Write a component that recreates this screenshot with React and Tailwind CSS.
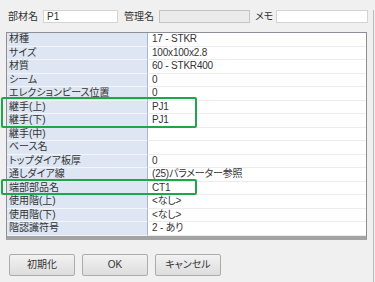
import React from 'react';

const rows = [
  ['材種', '17 - STKR'],
  ['サイズ', '100x100x2.8'],
  ['材質', '60 - STKR400'],
  ['シーム', '0'],
  ['エレクションピース位置', '0'],
  ['継手(上)', 'PJ1'],
  ['継手(下)', 'PJ1'],
  ['継手(中)', ''],
  ['ベース名', ''],
  ['トップダイア板厚', '0'],
  ['通しダイア線', '(25)パラメーター参照'],
  ['端部部品名', 'CT1'],
  ['使用階(上)', '<なし>'],
  ['使用階(下)', '<なし>'],
  ['階認識符号', '2 - あり'],
];

const font = "font-['Liberation_Sans','Noto_Sans_CJK_JP',sans-serif] [font-feature-settings:'palt']";

const Button = ({ children }) => (
  <button className="w-[66px] h-[22px] rounded-[2px] border border-[#acacac] bg-gradient-to-b from-[#f2f2f2] to-[#dddddd] text-[10px] text-[#333]">
    {children}
  </button>
);

const App = () => {
  return (
    <div className={`relative w-[375px] h-[282px] overflow-hidden bg-[#f0f0f0] text-[#333] ${font}`}>
      <div className="w-[374px] h-full border-r border-[#b9b9b9]">
        {/* Header fields */}
        <div className="flex items-center h-[13px] mt-[10px] pl-[8px] text-[10px] leading-none">
          <span className="w-[35px]">部材名</span>
          <div className="w-[75px] h-[13px] bg-white border border-[#d4d4d4] pl-[3px] flex items-center">P1</div>
          <span className="w-[35px] ml-[6px]">管理名</span>
          <div className="w-[91px] h-[13px] bg-[#ebebeb] border border-[#c4c4c4]" />
          <span className="w-[21px] ml-[5px]">メモ</span>
          <div className="w-[92px] h-[13px] bg-white border border-[#d4d4d4]" />
        </div>

        {/* Property grid */}
        <div className="mt-[9px] ml-[6px] w-[361px] border border-[#8c8f95] border-b-[4px] border-b-[#a3a3a3] bg-white text-[10px] leading-none">
          {rows.map(([label, value]) => (
            <div key={label} className="flex h-[13.5px]">
              <div className="w-[141px] shrink-0 bg-[#dde6f2] border-r border-[#a7b6cb] border-b border-b-[#f2f5fa] pl-[2px] flex items-center">
                {label}
              </div>
              <div className="flex-1 border-b border-[#ececec] pl-[4px] flex items-center tracking-[-0.2px]">{value}</div>
            </div>
          ))}
        </div>

        {/* Buttons */}
        <div className="flex gap-[7px] mt-[14px] ml-[9px]">
          <Button>初期化</Button>
          <Button>OK</Button>
          <Button>キャンセル</Button>
        </div>
      </div>

      {/* Highlight annotations */}
      <div className="absolute left-[1px] top-[97px] w-[196px] h-[31px] border-2 border-[#1fa54a] rounded-[2px]" />
      <div className="absolute left-[1px] top-[179px] w-[196px] h-[16px] border-2 border-[#1fa54a] rounded-[2px]" />
    </div>
  );
};

export default App;
